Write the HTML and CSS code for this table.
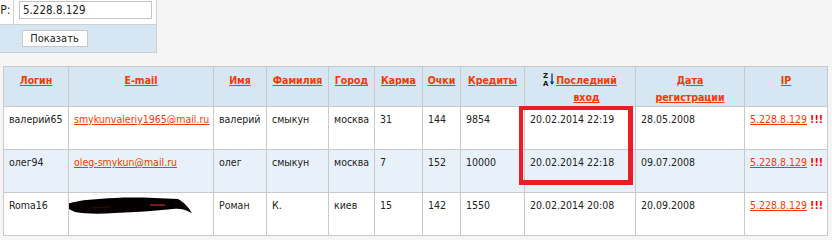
FILE: index.html
```html
<!DOCTYPE html>
<html lang="ru">
<head>
<meta charset="utf-8">
<title>Пользователи</title>
<link rel="stylesheet" href="styles.css">
</head>
<body>
<table class="filter">
  <tr class="filter-row">
    <td class="filter-label">IP:</td>
    <td class="filter-field"><input class="filter-input" type="text" value="5.228.8.129"></td>
  </tr>
  <tr class="filter-actions">
    <td></td>
    <td class="filter-btn-cell"><button class="filter-btn">Показать</button></td>
  </tr>
</table>

<div class="users-wrap">
<table class="users">
  <colgroup>
    <col style="width:65px"><col style="width:145px"><col style="width:53px"><col style="width:62px">
    <col style="width:46px"><col style="width:48px"><col style="width:38px"><col style="width:64px">
    <col style="width:111px"><col style="width:109px"><col style="width:83px">
  </colgroup>
  <thead>
    <tr>
      <th><a href="#">Логин</a></th>
      <th><a href="#">E-mail</a></th>
      <th><a href="#">Имя</a></th>
      <th><a href="#">Фамилия</a></th>
      <th><a href="#">Город</a></th>
      <th><a href="#">Карма</a></th>
      <th><a href="#">Очки</a></th>
      <th><a href="#">Кредиты</a></th>
      <th class="sorted"><span class="sort-ico"><svg width="12" height="14" viewBox="0 0 12 14"><text x="0" y="6" class="za">Z</text><text x="0" y="13.5" class="za">A</text><path d="M9 1.5 V12" stroke="#1a2a8a" stroke-width="1.3"/><path d="M6.8 9.5 L9 13 L11.2 9.5 Z" fill="#1a2a8a"/></svg></span><a href="#">Последний<br>вход</a></th>
      <th><a href="#">Дата<br>регистрации</a></th>
      <th><a href="#">IP</a></th>
    </tr>
  </thead>
  <tbody>
    <tr>
      <td>валерий65</td>
      <td><a href="#">smykunvaleriy1965@mail.ru</a></td>
      <td>валерий</td>
      <td>смыкун</td>
      <td>москва</td>
      <td>31</td>
      <td>144</td>
      <td>9854</td>
      <td>20.02.2014 22:19</td>
      <td>28.05.2008</td>
      <td><a href="#">5.228.8.129</a> <b class="warn">!!!</b></td>
    </tr>
    <tr class="alt">
      <td>олег94</td>
      <td><a href="#">oleg-smykun@mail.ru</a></td>
      <td>олег</td>
      <td>смыкун</td>
      <td>москва</td>
      <td>7</td>
      <td>152</td>
      <td>10000</td>
      <td>20.02.2014 22:18</td>
      <td>09.07.2008</td>
      <td><a href="#">5.228.8.129</a> <b class="warn">!!!</b></td>
    </tr>
    <tr>
      <td>Roma16</td>
      <td class="hidden-cell"><svg class="scribble" width="128" height="22" viewBox="0 0 128 22"><path d="M0 10 C10 5 30 4 50 3 C70 2 90 3 113 4 C120 8 124 13 127 18 C120 14 114 13 108 14 C90 16 70 17 50 18 C35 19 20 19 10 17 C5 15 2 13 0 10 Z" fill="#050000"/><path d="M85 10 L100 10" stroke="#c03030" stroke-width="1.2"/><path d="M25 13 L45 12" stroke="#3a0a0a" stroke-width="1"/></svg></td>
      <td>Роман</td>
      <td>К.</td>
      <td>киев</td>
      <td>15</td>
      <td>142</td>
      <td>1550</td>
      <td>20.02.2014 20:08</td>
      <td>20.09.2008</td>
      <td><a href="#">5.228.8.129</a> <b class="warn">!!!</b></td>
    </tr>
  </tbody>
</table>
<div class="highlight"></div>
</div>
</body>
</html>
```
FILE: styles.css
```css
html, body {
  margin: 0;
  padding: 0;
  background: #f5f5f5;
}
body {
  font-family: "DejaVu Sans Condensed", "DejaVu Sans", sans-serif;
  font-size: 10.5px;
  color: #222;
  width: 832px;
  height: 240px;
  overflow: hidden;
}
a {
  color: #f33a00;
  text-decoration: underline;
}

.filter {
  border-collapse: collapse;
  margin-left: -10px;
  margin-top: -7px;
  width: 167px;
}
.filter td {
  border: 1px solid #cfcfcf;
  padding: 0;
}
.filter-row td {
  background: #fff;
}
.filter-label {
  width: 18px;
  padding: 7px 0 5px 6px !important;
  font-size: 12px;
  vertical-align: middle;
}
.filter-field {
  padding: 7px 4px 5px 5px !important;
}
.filter-input {
  display: block;
  box-sizing: border-box;
  width: 133px;
  height: 18px;
  margin: 0;
  border: 1px solid #c4c4c4;
  padding: 0 3px;
  font-family: "DejaVu Sans Condensed", "DejaVu Sans", sans-serif;
  font-size: 11.5px;
  color: #222;
}
.filter-actions td {
  background: #d7e6f3;
  border-left: none;
  border-right: 1px solid #cfcfcf;
}
.filter-actions td:first-child {
  border-right: none;
  border-left: 1px solid #cfcfcf;
}
.filter-btn-cell {
  padding: 5px 0 5px 8px !important;
  vertical-align: top;
}
.filter-btn {
  display: block;
  box-sizing: border-box;
  width: 66px;
  height: 17px;
  margin: 0;
  background: #fff;
  border: 1px solid #c8c8c8;
  font-family: "DejaVu Sans Condensed", "DejaVu Sans", sans-serif;
  font-size: 11px;
  color: #222;
  padding: 0;
}

.users-wrap {
  position: relative;
  margin: 13px 0 0 3px;
}
.users {
  border-collapse: collapse;
  table-layout: fixed;
  width: 825px;
}
.users th, .users td {
  border: 1px solid #c9c9c9;
  vertical-align: top;
  line-height: 17px;
  white-space: nowrap;
  overflow: hidden;
}
.users th {
  background: #d7e6f3;
  padding: 5px 2px 0;
  text-align: center;
  font-weight: bold;
}
.users td {
  background: #fff;
  padding: 4px 5px 21px 5px;
}
.users tr.alt td {
  background: #e8f1f9;
}
.sort-ico {
  display: inline-block;
  vertical-align: top;
  margin-right: 1px;
}
.sort-ico svg {
  display: block;
}
.za {
  font-family: "DejaVu Sans", sans-serif;
  font-size: 7px;
  font-weight: bold;
  fill: #111;
}
.sorted a {
  display: inline-block;
  vertical-align: top;
}
.warn {
  color: #f00;
  font-weight: bold;
}
.users td.hidden-cell {
  padding: 2px 0 0 0;
  height: 40px;
  box-sizing: border-box;
}
.scribble {
  display: block;
  margin-left: -4px;
}
.highlight {
  position: absolute;
  left: 516px;
  top: 40px;
  width: 114px;
  height: 79px;
  box-sizing: border-box;
  border: 4px solid #ed1c24;
  border-right-width: 5px;
  border-bottom-width: 5px;
}
```
